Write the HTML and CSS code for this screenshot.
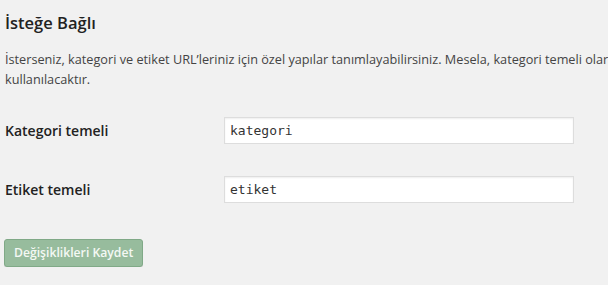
FILE: index.html
```html
<!DOCTYPE html>
<html lang="tr">
<head>
    <meta charset="UTF-8">
    <meta name="viewport" content="width=device-width, initial-scale=1.0">
    <title>Kalıcı bağlantı ayarları</title>
    <link rel="stylesheet" href="styles.css">
</head>
<body>
    <div class="wrap">
        <h3>İsteğe Bağlı</h3>
        <p class="intro">İsterseniz, kategori ve etiket URL’leriniz için özel yapılar tanımlayabilirsiniz. Mesela, kategori temeli olarak <code>konu</code> kullanırsanız, kategori bağlantılarınız şeklinde görünecektir. Bunları boş bırakırsanız varsayılan değerler<br>kullanılacaktır.</p>

        <div class="form-table">
            <div class="form-row">
                <label for="category_base">Kategori temeli</label>
                <input type="text" id="category_base" class="code" value="kategori">
            </div>
            <div class="form-row">
                <label for="tag_base">Etiket temeli</label>
                <input type="text" id="tag_base" class="code" value="etiket">
            </div>
        </div>

        <button class="button-primary" disabled>Değişiklikleri Kaydet</button>
    </div>
</body>
</html>
```

FILE: styles.css
```css
html, body {
    margin: 0;
    padding: 0;
    overflow: hidden;
}
body {
    font-family: 'Open Sans', sans-serif;
    background-color: #f1f1f1;
    color: #444;
}
.wrap {
    padding: 10px 0 0 5px;
}
h3 {
    margin: 0 0 15px;
    font-size: 16.5px;
    font-weight: 600;
    line-height: 25px;
    color: #222;
}
.intro {
    margin: 0 0 13px;
    font-size: 12.7px;
    line-height: 18.5px;
    white-space: nowrap;
}
.intro code {
    font-family: 'DejaVu Sans Mono', monospace;
    background: rgba(0, 0, 0, 0.07);
    padding: 1px 4px;
}
.form-row {
    display: flex;
    align-items: center;
    padding: 16px 0;
}
.form-row label {
    width: 219px;
    font-size: 14px;
    font-weight: 600;
    color: #222;
}
.form-row input {
    box-sizing: border-box;
    width: 350px;
    height: 27px;
    padding: 0 5px;
    border: 1px solid #ddd;
    box-shadow: inset 0 1px 2px rgba(0, 0, 0, 0.07);
    background-color: #fff;
    color: #333;
    font-family: 'DejaVu Sans Mono', monospace;
    font-size: 13px;
    outline: none;
}
.button-primary {
    margin: 20px 0 0 -1px;
    height: 28px;
    padding: 0 9px 1px;
    background-color: #97bc9d;
    border: 1px solid #80a987;
    border-radius: 3px;
    box-shadow: 0 1px 0 rgba(0, 0, 0, 0.1);
    color: #f4f8f4;
    font-family: 'Open Sans', sans-serif;
    font-size: 12.2px;
    font-weight: 600;
    white-space: nowrap;
    cursor: default;
}
```
